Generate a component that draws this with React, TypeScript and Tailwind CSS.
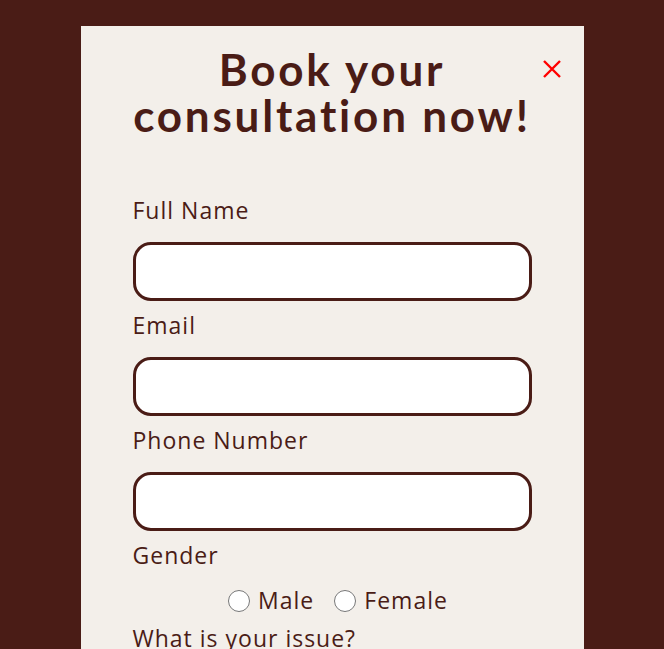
import React, { useState } from 'react';

const fields = [
  { id: 'name', label: 'Full Name', type: 'text' },
  { id: 'email', label: 'Email', type: 'email' },
  { id: 'phone', label: 'Phone Number', type: 'tel' },
];

export default function App() {
  const [gender, setGender] = useState('');

  return (
    <div className="min-h-[649px] bg-[#4a1c16] pt-[26px] font-['Open_Sans',sans-serif] text-[#4a1c16]">
      <div className="mx-auto w-[503px] bg-[#f3efea] px-[52px] pb-10 pt-[20px]">
        {/* Header */}
        <div className="relative">
          <h2 className="text-center font-['Lato',sans-serif] text-[44px] font-bold leading-[46px] tracking-[2.8px]">
            Book your
            <br />
            consultation now!
          </h2>
          <button
            type="button"
            aria-label="Close"
            className="absolute right-[-30px] top-[13px] h-5 w-5"
          >
            <svg viewBox="0 0 20 20" className="h-5 w-5" fill="none" stroke="#ff0000" strokeWidth="2.4">
              <path d="M2 2 L18 18 M18 2 L2 18" />
            </svg>
          </button>
        </div>

        <form className="mt-[56px]">
          {fields.map((f) => (
            <div key={f.id} className="mb-[8px]">
              <label htmlFor={f.id} className="block text-[23px] leading-[33px] tracking-[1px]">
                {f.label}
              </label>
              <input
                id={f.id}
                type={f.type}
                className="mt-[15px] block h-[59px] w-full rounded-[18px] border-[3px] border-[#4a1c16] bg-white px-4 outline-none"
              />
            </div>
          ))}

          <div>
            <label className="block text-[23px] leading-[33px] tracking-[1px]">Gender</label>
            <div className="mt-[12px] flex items-center justify-center gap-[20px] pl-[12px] text-[23px] leading-[33px] tracking-[1px]">
              <label className="flex items-center gap-[8px]">
                <input
                  type="radio"
                  name="gender"
                  checked={gender === 'male'}
                  onChange={() => setGender('male')}
                  className="h-[22px] w-[22px]"
                />
                Male
              </label>
              <label className="flex items-center gap-[8px]">
                <input
                  type="radio"
                  name="gender"
                  checked={gender === 'female'}
                  onChange={() => setGender('female')}
                  className="h-[22px] w-[22px]"
                />
                Female
              </label>
            </div>
          </div>

          <label className="mt-[5px] block text-[23px] leading-[33px] tracking-[1px]">
            What is your issue?
          </label>
        </form>
      </div>
    </div>
  );
}
